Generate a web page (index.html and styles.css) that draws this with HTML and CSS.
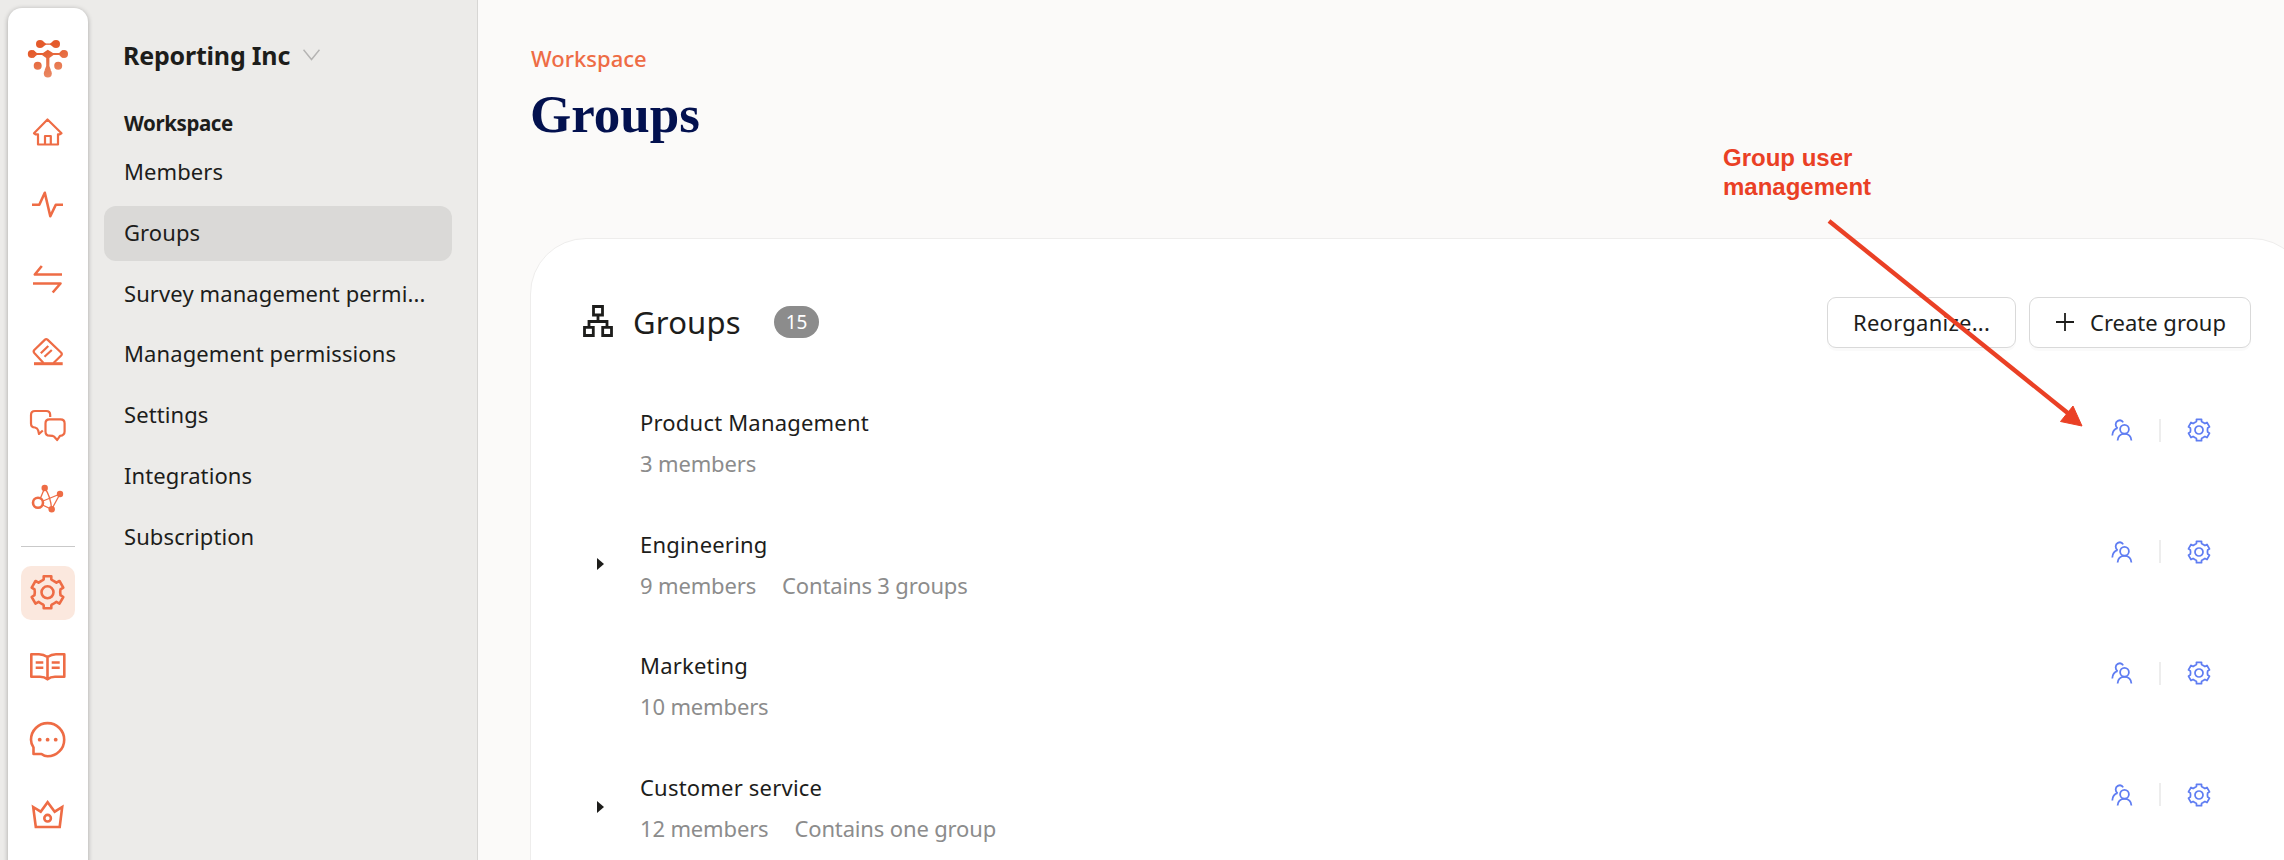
FILE: index.html
```
<!DOCTYPE html>
<html lang="en">
<head>
    <meta charset="UTF-8">
    <title>Groups</title>
    <link rel="stylesheet" href="styles.css">
</head>
<body>
    <svg class="defs">
        <defs>
            <linearGradient id="logoFill" gradientUnits="userSpaceOnUse" x1="20" y1="10" x2="32" y2="46">
                <stop offset="0.2" stop-color="#e45a2b"/>
                <stop offset="1" stop-color="#ea8a66"/>
            </linearGradient>
            <symbol id="gear" viewBox="-18 -18 36 36">
                <path d="M-3.8-16H3.8V-13Q4.2-12.2 5.6-11.7L8.9-9.6 12-11.3 15.8-4.7 13-2.9Q12.3 0 13 2.9L15.8 4.7 12 11.3 8.9 9.6 5.6 11.7Q4.2 12.2 3.8 13V16H-3.8V13Q-4.2 12.2-5.6 11.7L-8.9 9.6-12 11.3-15.8 4.7-13 2.9Q-12.3 0-13-2.9L-15.8-4.7-12-11.3-8.9-9.6-5.6-11.7Q-4.2-12.2-3.8-13Z"/>
                <circle r="6"/>
            </symbol>
            <symbol id="users" viewBox="0 0 22 22">
                <circle cx="13.5" cy="10.3" r="4.4"/>
                <path d="M6.6 21.5C6.9 17 9.8 14.8 13.5 14.8S20.1 17 20.4 21.5"/>
                <path d="M12.2 3.4C11 1.4 8.6 1 6.8 1.9 4 3.3 4 7.2 6.6 9.2M6.6 9.2C3.5 10 1.5 12.6 1.3 16.5"/>
            </symbol>
        </defs>
    </svg>

    <div class="app">
        <aside class="sidebar">
            <nav class="rail">
                <a class="rail-item"><svg class="logo" viewBox="0 0 54 54">
                    <circle cx="19" cy="13" r="4"/><circle cx="35" cy="13" r="4"/>
                    <path d="M21 9.8 25 12.4H29L33 9.8V16.2L29 13.8H25L21 16.2Z"/>
                    <circle cx="10.8" cy="23" r="4"/><circle cx="43" cy="23" r="4"/>
                    <path d="M12 19.2 16 22H22L26.8 18.8 32 22H38L42 19.2V26.8L38 24H32.5L28.4 27V35L30 39.5H23.5L25.2 35V27L21 24H16L12 26.8Z"/>
                    <circle cx="16.7" cy="34.7" r="4"/><circle cx="37.2" cy="34.7" r="4"/>
                    <circle cx="26.8" cy="42.5" r="4"/>
                </svg></a>
                <a class="rail-item"><svg viewBox="0 0 54 54">
                    <path d="M26.5 14.5 40.5 28.3 38.8 29.3H37V39.5H17V29.3H14.5L13 28.3ZM24 39.5V31H29.8V39.5"/>
                </svg></a>
                <a class="rail-item"><svg viewBox="0 0 54 54">
                    <path class="bold" d="M11 26.7H18.3L23.8 14.8 29.3 38.3 34.8 26.7H42"/>
                </svg></a>
                <a class="rail-item"><svg viewBox="0 0 54 54">
                    <path class="bold" d="M20.8 14 13.8 22.5H41M12 31.5H39.5L31.7 40.5"/>
                </svg></a>
                <a class="rail-item"><svg viewBox="0 0 54 54">
                    <path d="M22.5 38 13.3 28Q12 26.5 13.3 25L24 14.6Q25.2 13.5 26.5 14.6L40 27.5Q41.5 29 40.2 30.5L32.5 38"/>
                    <path d="M19.8 28.3 27.3 21M23.5 31.7 30.8 25"/>
                    <path class="heavy" d="M13 38.7H41.7"/>
                </svg></a>
                <a class="rail-item"><svg viewBox="0 0 54 54">
                    <path d="M29.2 18V16Q29.2 12 25.2 12H14Q10 12 10 16V24.5Q10 28.5 14 28.5 16.5 29 17.2 31.5L18 35 21.8 31.5"/>
                    <path d="M28.5 20.3H39.5Q43.6 20.3 43.6 24.3V32.5Q43.6 36.5 39 36.8L36.2 41 33 37.5Q32 36.7 28.5 36.7 24.5 36.7 24.5 32.5V24.3Q24.5 20.3 28.5 20.3Z"/>
                </svg></a>
                <a class="rail-item"><svg viewBox="0 0 54 54">
                    <path class="thin" d="M19.5 26 23.7 16M30.7 37.3 39 22 22 29M21.5 33 30.7 37.3"/>
                    <path class="thin" d="M23.7 16Q29.5 24 30.7 37.3"/>
                    <circle class="bold" cx="17" cy="30.7" r="5"/>
                    <g class="dots"><circle cx="23.7" cy="16" r="3.2"/><circle cx="39" cy="22" r="3.2"/><circle cx="30.7" cy="37.3" r="3.2"/></g>
                </svg></a>
                <div class="rail-line"></div>
                <a class="rail-item active"><svg viewBox="0 0 54 54">
                    <use class="bold" href="#gear" x="8.5" y="8.3" width="36" height="36"/>
                </svg></a>
                <a class="rail-item"><svg viewBox="0 0 54 54">
                    <path class="bold" d="M26.5 17Q22.5 14.2 18 14.2H10.3V36.7H19Q23.5 36.7 26.5 39.3 29.5 36.7 34 36.7H43.3V14.2H35Q30.5 14.2 26.5 17ZV39M14.7 22.5H22.3M14.7 27.8H22.3M30.7 22.5H38.7M30.7 27.8H38.7"/>
                </svg></a>
                <a class="rail-item"><svg viewBox="0 0 54 54">
                    <path class="bold" d="M12.5 41V34.5Q10 31 10 26.7A16.6 16.6 0 1 1 26.6 43.3Q23.5 43.3 20.5 41Z"/>
                    <g class="dots"><circle cx="18.7" cy="26.7" r="1.9"/><circle cx="26.6" cy="26.7" r="1.9"/><circle cx="34.7" cy="26.7" r="1.9"/></g>
                </svg></a>
                <a class="rail-item"><svg viewBox="0 0 54 54">
                    <path class="bold miter" d="M12.2 20 19.7 24.7 26.6 15.2 33.7 24.7 41.2 20 38.7 40H14.8Z"/>
                    <circle class="bold" cx="26.6" cy="31.2" r="3.3"/>
                </svg></a>
            </nav>

            <div class="menu">
                <div class="company">
                    <span>Reporting Inc</span>
                    <svg class="chevron" viewBox="0 0 17 12"><path d="M0.5 0.8 8.5 10.5 16.5 0.8"/></svg>
                </div>
                <h2 class="menu-title">Workspace</h2>
                <ul class="menu-list">
                    <li>Members</li>
                    <li class="selected">Groups</li>
                    <li>Survey management permi...</li>
                    <li>Management permissions</li>
                    <li>Settings</li>
                    <li>Integrations</li>
                    <li>Subscription</li>
                </ul>
            </div>
        </aside>

        <main class="content">
            <div class="breadcrumb">Workspace</div>
            <h1 class="page-title">Groups</h1>

            <section class="card">
                <header class="card-header">
                    <svg class="tree" viewBox="0 0 30 32">
                        <path d="M10.5 1.5H19.5V10H10.5ZM1.5 22.3H10.3V30.5H1.5ZM19.7 22.3H28.5V30.5H19.7ZM15 10V16.5M6 22V16.5H24V22"/>
                    </svg>
                    <h2 class="card-title">Groups</h2>
                    <span class="badge">15</span>
                    <div class="actions">
                        <button class="btn reorganize">Reorganize...</button>
                        <button class="btn create">
                            <svg class="plus" viewBox="0 0 18 18"><path d="M9 0V18M0 9H18"/></svg>
                            Create group
                        </button>
                    </div>
                </header>

                <div class="group">
                    <span class="toggle"></span>
                    <div class="info">
                        <div class="name">Product Management</div>
                        <div class="meta"><span>3 members</span></div>
                    </div>
                    <div class="tools">
                        <svg class="icon-users"><use href="#users"/></svg>
                        <i class="sep"></i>
                        <svg class="icon-gear"><use href="#gear"/></svg>
                    </div>
                </div>
                <div class="group">
                    <span class="toggle arrow"></span>
                    <div class="info">
                        <div class="name">Engineering</div>
                        <div class="meta"><span>9 members</span><span>Contains 3 groups</span></div>
                    </div>
                    <div class="tools">
                        <svg class="icon-users"><use href="#users"/></svg>
                        <i class="sep"></i>
                        <svg class="icon-gear"><use href="#gear"/></svg>
                    </div>
                </div>
                <div class="group">
                    <span class="toggle"></span>
                    <div class="info">
                        <div class="name">Marketing</div>
                        <div class="meta"><span>10 members</span></div>
                    </div>
                    <div class="tools">
                        <svg class="icon-users"><use href="#users"/></svg>
                        <i class="sep"></i>
                        <svg class="icon-gear"><use href="#gear"/></svg>
                    </div>
                </div>
                <div class="group">
                    <span class="toggle arrow"></span>
                    <div class="info">
                        <div class="name">Customer service</div>
                        <div class="meta"><span>12 members</span><span>Contains one group</span></div>
                    </div>
                    <div class="tools">
                        <svg class="icon-users"><use href="#users"/></svg>
                        <i class="sep"></i>
                        <svg class="icon-gear"><use href="#gear"/></svg>
                    </div>
                </div>
            </section>
        </main>
    </div>

    <!-- callout over the page -->
    <div class="callout">
        <p>Group user<br>management</p>
        <svg class="callout-arrow" viewBox="0 0 260 212">
            <path class="shaft" d="M3 3 243 196"/>
            <path class="head" d="M256 208 247 188 234.500 203.500Z"/>
        </svg>
    </div>
</body>
</html>
```
FILE: styles.css
```
* {
    box-sizing: border-box;
}

body {
    margin: 0;
    height: 860px;
    overflow: hidden;
    position: relative;
    font-family: "Noto Sans", sans-serif;
    font-size: 22px;
    line-height: 30px;
    color: #1d1d1b;
    background-color: #fbfaf9;
}

h1, h2, p, ul {
    margin: 0;
    padding: 0;
}

.defs {
    position: absolute;
    width: 0;
    height: 0;
}

.app {
    display: flex;
    height: 860px;
    overflow: hidden;
}

/* sidebar */
.sidebar {
    display: flex;
    flex: none;
    width: 478px;
    padding: 8px 0 0 8px;
    background-color: #ecebe9;
    border-right: 1px solid #d7d6d4;
}

.rail {
    display: flex;
    flex-direction: column;
    align-items: center;
    gap: 19.5px;
    flex: none;
    width: 80px;
    height: 870px;
    padding-top: 23px;
    background: white;
    border-radius: 14px 14px 0 0;
    box-shadow: 0 1px 5px rgba(0,0,0,0.3);
}

.rail-item {
    flex: none;
    width: 54px;
    height: 54px;
    border-radius: 10px;
}

.rail-item.active {
    background-color: #fbe8de;
}

.rail-item svg {
    display: block;
    width: 54px;
    height: 54px;
    fill: none;
    stroke: #ee6c45;
    stroke-width: 2.2;
    stroke-linejoin: round;
}

.rail-item svg.logo {
    fill: url(#logoFill);
    stroke: none;
}

.rail-item .bold {
    stroke-width: 2.6;
}

.rail-item .heavy {
    stroke-width: 3;
}

.rail-item .thin {
    stroke-width: 1.3;
}

.rail-item .miter {
    stroke-linejoin: miter;
}

.rail-item .dots {
    fill: #ee6c45;
    stroke: none;
}

.rail-line {
    flex: none;
    width: 54px;
    height: 1px;
    background-color: #c9c9c9;
}

.menu {
    flex: 1;
    padding: 32px 25px 0 16px;
}

.company {
    display: flex;
    align-items: center;
    gap: 13px;
    padding-left: 19px;
    font-size: 25px;
    font-weight: bold;
    letter-spacing: -0.2px;
}

.chevron {
    width: 17px;
    height: 12px;
    fill: none;
    stroke: #b5b4b3;
    stroke-width: 1.5;
}

.menu-title {
    padding-left: 20px;
    margin-top: 38px;
    font-size: 20.5px;
    line-height: 30px;
    letter-spacing: -0.4px;
}

.menu-list {
    display: flex;
    flex-direction: column;
    gap: 5.8px;
    margin-top: 7px;
    list-style: none;
}

.menu-list li {
    height: 55px;
    padding-left: 20px;
    border-radius: 12px;
    line-height: 53px;
    letter-spacing: 0.1px;
    white-space: nowrap;
}

.menu-list .selected {
    background-color: #dad9d7;
}

/* main */
.content {
    flex: 1;
    min-width: 0;
    padding: 43px 0 0 52px;
}

.breadcrumb {
    padding-left: 1px;
    font-weight: 500;
    color: #ee6c45;
}

.page-title {
    margin-top: 11px;
    font-family: "Liberation Serif", serif;
    font-size: 53px;
    line-height: 60px;
    color: #03114f;
}

.card {
    width: 1778px;
    height: 800px;
    margin-top: 94px;
    padding: 58px 56px 0 52px;
    background: white;
    border: 1px solid #eeedec;
    border-radius: 56px;
}

.card-header {
    display: flex;
    align-items: center;
    height: 51px;
}

.tree {
    width: 30px;
    height: 32px;
    margin-top: -3px;
    fill: none;
    stroke: #1d1d1b;
    stroke-width: 2.8;
}

.card-title {
    width: 141px;
    margin: -1px 0 0 20px;
    font-size: 31px;
    font-weight: normal;
    letter-spacing: 0.2px;
}

.badge {
    width: 45px;
    height: 32px;
    border-radius: 16px;
    margin-top: -2px;
    background-color: #8c8c8c;
    color: white;
    font-size: 19px;
    line-height: 32px;
    text-align: center;
}

.actions {
    display: flex;
    gap: 13px;
    margin-left: auto;
}

.btn {
    display: flex;
    align-items: center;
    height: 51px;
    padding: 0 25px 2px;
    background: white;
    border: 1px solid #d9d9d9;
    border-radius: 9px;
    box-shadow: 0 3px 0 rgba(0,0,0,0.02);
    font: 22px "Noto Sans", sans-serif;
    color: #1d1d1b;
    white-space: nowrap;
}

.reorganize {
    width: 189px;
    letter-spacing: 0.25px;
}

.create {
    width: 222px;
    padding-left: 26px;
}

.plus {
    flex: none;
    width: 18px;
    height: 18px;
    margin-right: 16px;
    stroke: #1d1d1b;
    stroke-width: 1.8;
}

.group {
    display: flex;
    align-items: center;
    height: 71px;
    margin-bottom: 50.5px;
}

.card-header + .group {
    margin-top: 59px;
}

.toggle {
    width: 43px;
    margin-left: 14px;
}

.toggle.arrow::before {
    content: "";
    display: block;
    width: 0;
    border-left: 7px solid #1d1d1b;
    border-top: 6px solid transparent;
    border-bottom: 6px solid transparent;
}

.name {
    letter-spacing: 0.2px;
}

.meta {
    display: flex;
    gap: 26px;
    margin-top: 11px;
    letter-spacing: -0.15px;
    color: #8c8c8c;
}

.tools {
    display: flex;
    align-items: center;
    align-self: flex-start;
    height: 46px;
    margin: 0 40px 0 auto;
    fill: none;
    stroke: #5f7df2;
    stroke-linejoin: round;
}

.icon-users {
    width: 22px;
    height: 22px;
    stroke-width: 1.8;
}

.sep {
    width: 2px;
    height: 23px;
    margin: 0 26px;
    background-color: #ededed;
}

.icon-gear {
    width: 24px;
    height: 24px;
    stroke-width: 2.6;
}

/* callout */
.callout {
    position: absolute;
    left: 1723px;
    top: 143px;
    font: bold 24px/29px "Liberation Sans", sans-serif;
    color: #ea4025;
}

.callout-arrow {
    display: block;
    width: 260px;
    height: 212px;
    margin: 17px 0 0 103px;
}

.shaft {
    stroke: #ea4025;
    stroke-width: 4.4;
}

.head {
    fill: #ea4025;
    stroke: #ea4025;
}
```
